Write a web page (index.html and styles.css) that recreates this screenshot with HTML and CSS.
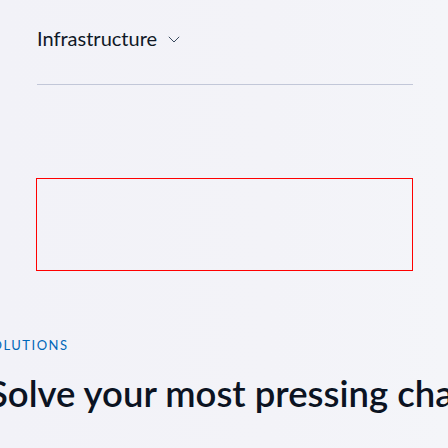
FILE: index.html
```html
<!DOCTYPE html>
<html lang="en">
<head>
<meta charset="utf-8">
<title>Infrastructure</title>
<link rel="stylesheet" href="styles.css">
</head>
<body>
<div class="page">
  <nav class="subnav">
    <button class="subnav-toggle" type="button">
      <span class="subnav-title">Infrastructure</span>
      <svg class="chevron" width="12" height="7" viewBox="0 0 12 7" aria-hidden="true"><path d="M0.8 0.8 L6 6 L11.2 0.8" fill="none" stroke="#3a4a5e" stroke-width="1"/></svg>
    </button>
    <hr class="subnav-rule">
  </nav>
  <div class="frame-box"></div>
  <section class="solutions">
    <p class="eyebrow">SOLUTIONS</p>
    <h2 class="headline">Solve your most pressing challenges</h2>
  </section>
</div>
</body>
</html>
```
FILE: styles.css
```css
* { box-sizing: border-box; }
html, body {
  margin: 0;
  height: 100%;
}
body {
  background: linear-gradient(90deg, #f2f2f8 0%, #f3f3f8 60%, #f4f5f9 100%);
  font-family: "Lato", "Open Sans", sans-serif;
  overflow: hidden;
}
.page {
  width: 448px;
  height: 448px;
  padding: 24px 35px 0 36px;
  display: flex;
  flex-direction: column;
}
.subnav {
  padding-left: 1px;
}
.subnav-toggle {
  display: flex;
  align-items: center;
  gap: 11px;
  background: none;
  border: 0;
  padding: 0;
  font: inherit;
  cursor: pointer;
}
.subnav-title {
  font-size: 20px;
  line-height: 28px;
  color: #0f1826;
}
.chevron {
  margin-top: 2px;
}
.subnav-rule {
  margin: 32px 0 0;
  border: 0;
  border-top: 1px solid #c2c7d8;
  height: 0;
}
.frame-box {
  margin-top: 93px;
  height: 93px;
  border: 1px solid #ff0000;
}
.solutions {
  margin-left: -40px;
  white-space: nowrap;
}
.eyebrow {
  margin: 65px 0 0 -13px;
  font-size: 13px;
  line-height: 18px;
  letter-spacing: 1.5px;
  color: #0067b8;
}
.headline {
  margin: 17px 0 0 -8px;
  font-size: 36.5px;
  line-height: 44px;
  font-weight: 600;
  color: #0b1322;
}
```
